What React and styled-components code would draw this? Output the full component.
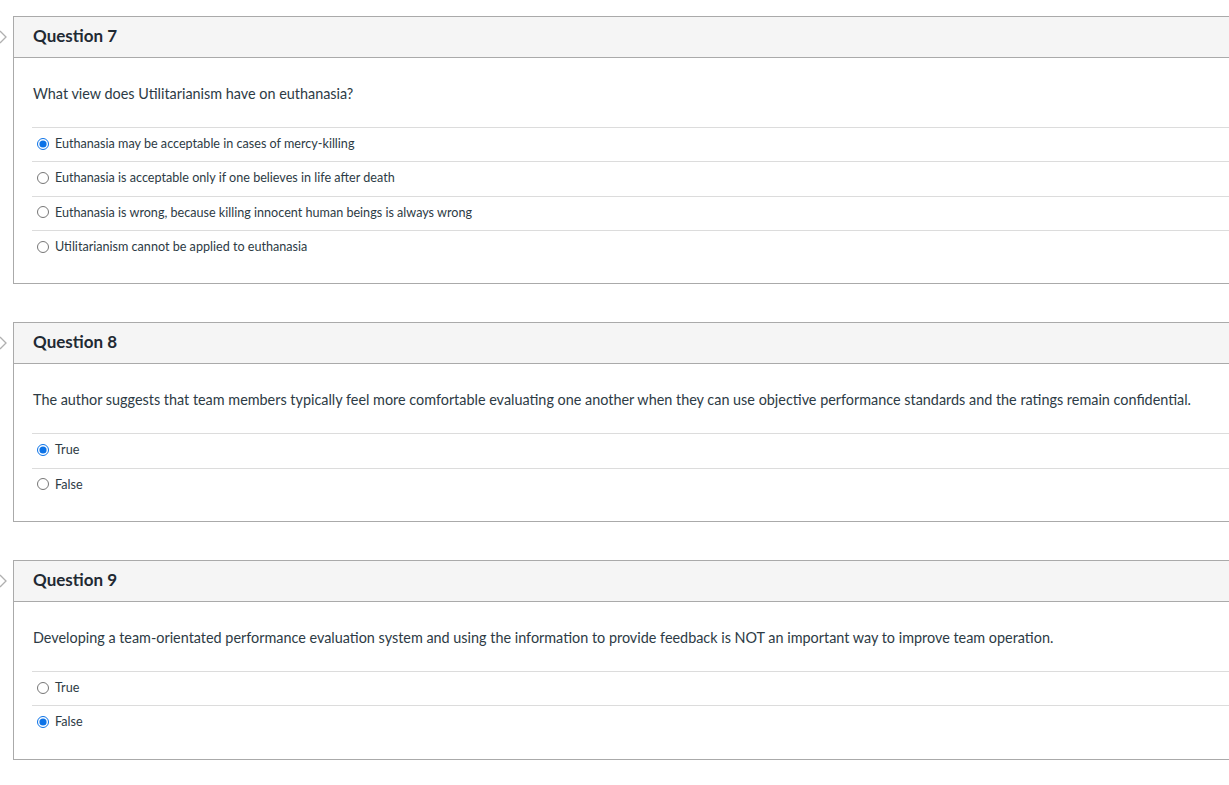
import React from "react";
import styled, { createGlobalStyle } from "styled-components";

const Global = createGlobalStyle`
  html, body { margin: 0; padding: 0; background: #fff; overflow: hidden; }
  body { font-family: Lato, "Noto Sans", sans-serif; color: #2d3b45; }
`;

const Page = styled.div`
  display: flex;
  flex-direction: column;
  gap: 38px;
  padding: 16px 0 0 13px;
`;

const QuestionWrap = styled.section`
  position: relative;
`;

const Chevron = styled.svg`
  position: absolute;
  left: -17px;
  top: 14px;
  width: 12px;
  height: 14px;
`;

const Card = styled.div`
  width: 1240px;
  border: 1px solid #aaaaaa;
  background: #fff;
`;

const Header = styled.header`
  height: 41px;
  box-sizing: border-box;
  display: flex;
  align-items: center;
  padding: 0 0 3px 19px;
  background: #f5f5f5;
  border-bottom: 1px solid #aaaaaa;
`;

const Title = styled.h2`
  margin: 0;
  font-size: 17px;
  font-weight: 700;
  color: #1f2a33;
`;

const Body = styled.div`
  padding: 26px 0 19px 18px;
`;

const Prompt = styled.p`
  margin: 0 0 23px 1px;
  font-size: 14.4px;
  line-height: 20px;
  color: #2d3b45;
`;

const Answers = styled.ul`
  list-style: none;
  margin: 0;
  padding: 0;
`;

const Answer = styled.li`
  display: flex;
  align-items: center;
  gap: 6px;
  border-top: 1px solid #dcdcdc;
  padding: 7px 0 9px 5px;
  font-size: 12.6px;
  line-height: 17.33px;
  color: #2d3b45;
`;

const Radio = styled.input.attrs({ type: "radio", readOnly: true })`
  margin: 0;
  width: 12px;
  height: 12px;
  accent-color: #0b72e7;
`;

const questions = [
  {
    n: 7,
    prompt: "What view does Utilitarianism have on euthanasia?",
    answers: [
      "Euthanasia may be acceptable in cases of mercy-killing",
      "Euthanasia is acceptable only if one believes in life after death",
      "Euthanasia is wrong, because killing innocent human beings is always wrong",
      "Utilitarianism cannot be applied to euthanasia",
    ],
    selected: 0,
  },
  {
    n: 8,
    prompt:
      "The author suggests that team members typically feel more comfortable evaluating one another when they can use objective performance standards and the ratings remain confidential.",
    answers: ["True", "False"],
    selected: 0,
  },
  {
    n: 9,
    prompt:
      "Developing a team-orientated performance evaluation system and using the information to provide feedback is NOT an important way to improve team operation.",
    answers: ["True", "False"],
    selected: 1,
  },
];

export default function App() {
  return (
    <>
      <Global />
      <Page>
        {questions.map((q) => (
          <QuestionWrap key={q.n}>
            <Chevron viewBox="0 0 12 14">
              <polyline points="4,1 10,7 4,13" fill="none" stroke="#b0b0b0" strokeWidth="1.3" />
            </Chevron>
            <Card>
              <Header>
                <Title>Question {q.n}</Title>
              </Header>
              <Body>
                <Prompt>{q.prompt}</Prompt>
                <Answers>
                  {q.answers.map((a, i) => (
                    <Answer key={a}>
                      <Radio name={`q${q.n}`} checked={i === q.selected} />
                      <span>{a}</span>
                    </Answer>
                  ))}
                </Answers>
              </Body>
            </Card>
          </QuestionWrap>
        ))}
      </Page>
    </>
  );
}
